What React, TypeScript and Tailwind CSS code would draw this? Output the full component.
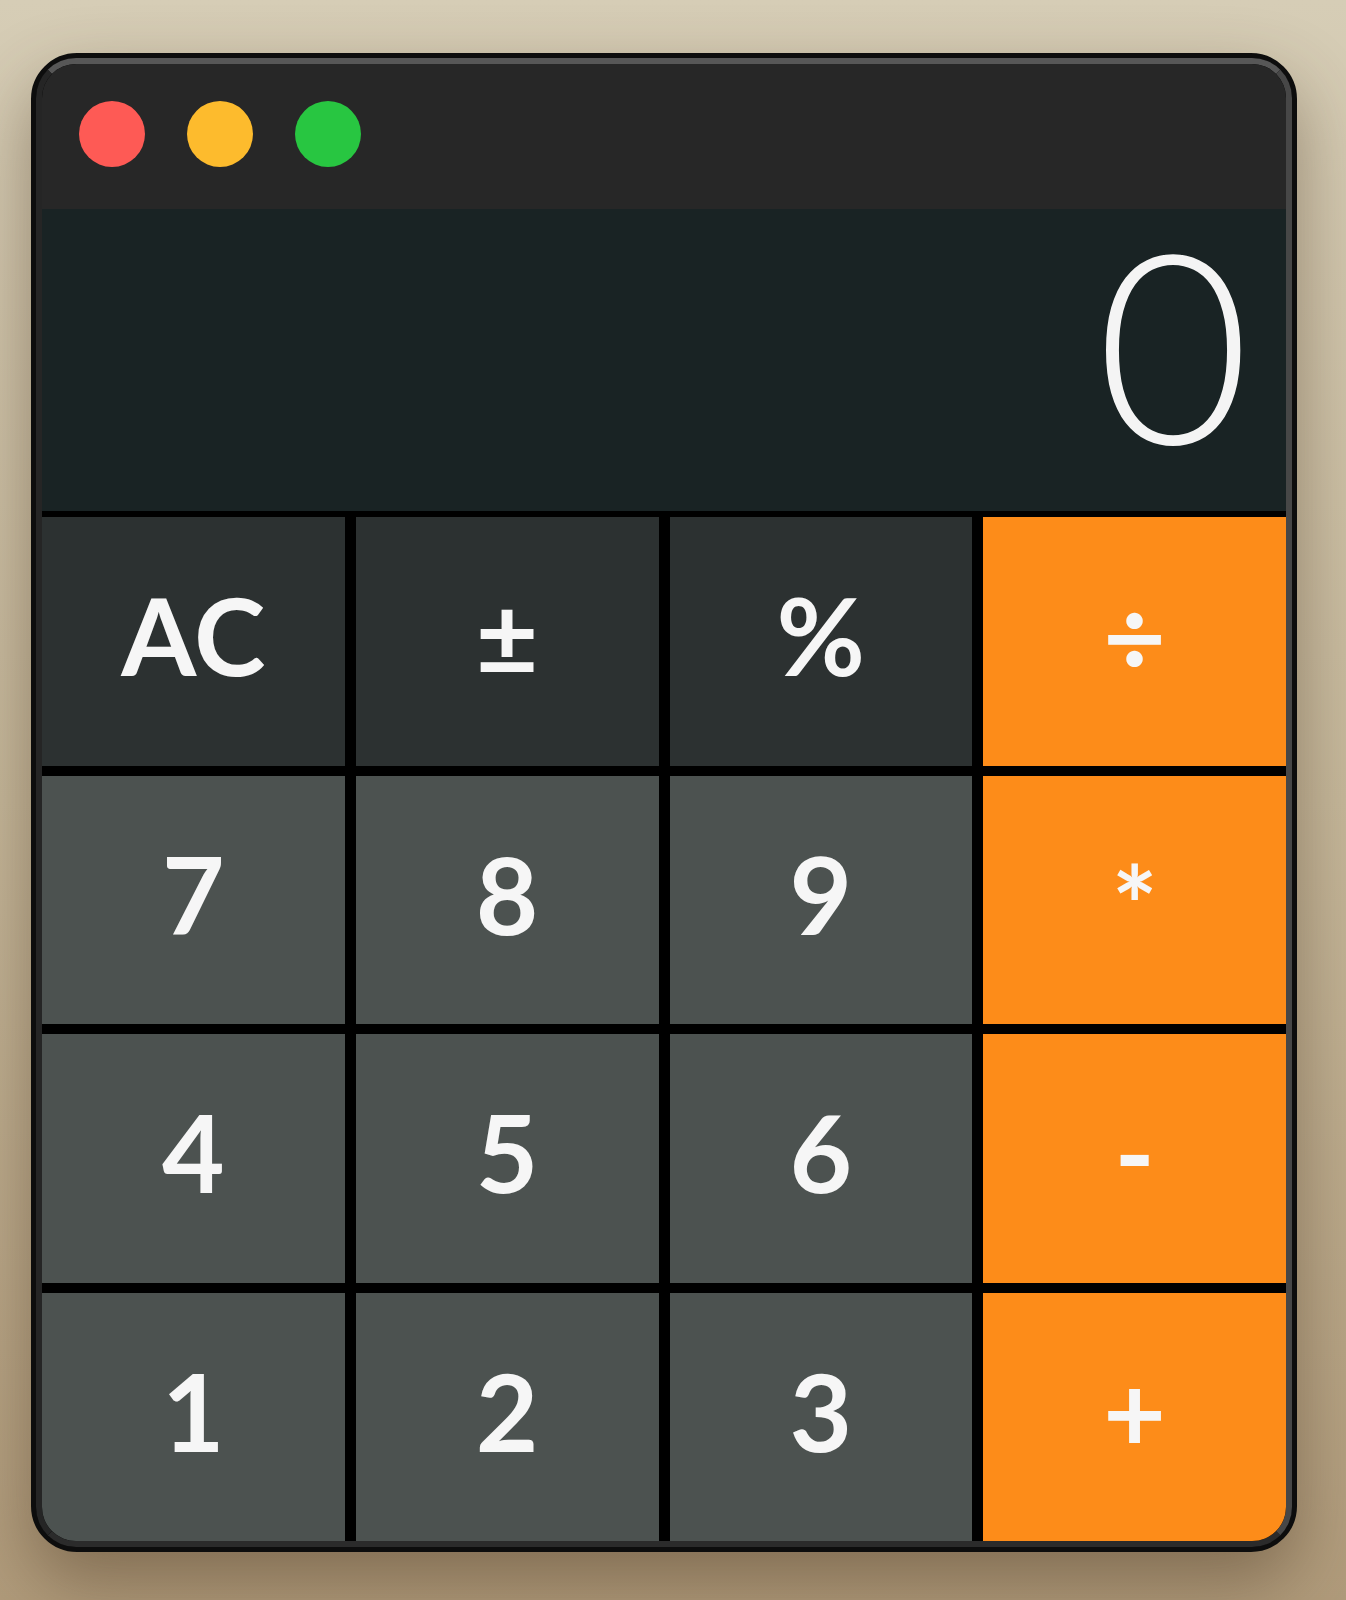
import React from 'react';

type Key = { label: string; kind: 'fn' | 'num' | 'op' };

const keys: Key[] = [
  { label: 'AC', kind: 'fn' },
  { label: '±', kind: 'fn' },
  { label: '%', kind: 'fn' },
  { label: '÷', kind: 'op' },
  { label: '7', kind: 'num' },
  { label: '8', kind: 'num' },
  { label: '9', kind: 'num' },
  { label: '*', kind: 'op' },
  { label: '4', kind: 'num' },
  { label: '5', kind: 'num' },
  { label: '6', kind: 'num' },
  { label: '-', kind: 'op' },
  { label: '1', kind: 'num' },
  { label: '2', kind: 'num' },
  { label: '3', kind: 'num' },
  { label: '+', kind: 'op' },
];

const keyBg = {
  fn: 'bg-[#2c3131]',
  num: 'bg-[#4c5250]',
  op: 'bg-[#fd8c19]',
};

export default function App() {
  return (
    <div className="min-h-[1600px] w-full bg-gradient-to-b from-[#d6cdb6] via-[#c6b89b] to-[#b09b7b] pt-[53px] pl-[31px]">
      {/* Window frame */}
      <div className="w-[1266px] rounded-[46px] border-[5px] border-[#0d0d0d] bg-black shadow-[0_30px_70px_rgba(70,50,30,0.45)]">
        <div className="overflow-hidden rounded-[40px] border-[6px] border-t-[#575757] border-r-[#474747] border-b-[#2b2b2b] border-l-[#252525] bg-black flex flex-col">
          {/* Title bar */}
          <div className="h-[145px] bg-[#272727] flex items-center gap-[42px] pl-[37px] pb-[6px]">
            <span className="w-[66px] h-[66px] rounded-full bg-[#fe5a55]" />
            <span className="w-[66px] h-[66px] rounded-full bg-[#fdbb2d]" />
            <span className="w-[66px] h-[66px] rounded-full bg-[#28c641]" />
          </div>

          {/* Display */}
          <div className="h-[302px] bg-[#192324] flex justify-end items-start pr-[36px]">
            <span className="text-[265px] leading-none font-light text-[#f4f4f4] font-['Lato','Open_Sans',sans-serif]">0</span>
          </div>

          {/* Keypad */}
          <div className="mt-[6px] h-[1024px] grid grid-cols-4 grid-rows-4 gap-x-[11px] gap-y-[10px] bg-black">
            {keys.map((k) => (
              <button
                key={k.label}
                className={`${keyBg[k.kind]} flex items-center justify-center text-[108px] leading-none font-bold text-[#f6f6f6] font-['Lato','Open_Sans',sans-serif] ${k.label === '*' ? 'pt-[6px] text-[100px]' : 'pb-[14px]'}`}
              >
                {k.label}
              </button>
            ))}
          </div>
        </div>
      </div>
    </div>
  );
}
